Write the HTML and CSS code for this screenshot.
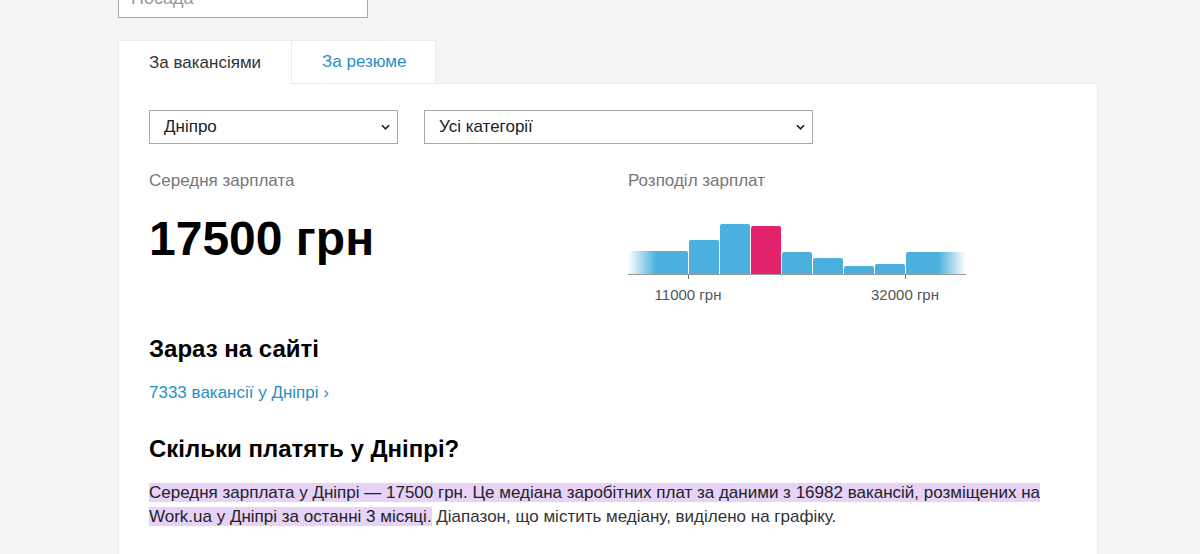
FILE: index.html
```html
<!DOCTYPE html>
<html lang="uk">
<head>
<meta charset="utf-8">
<title>Зарплати</title>
<link rel="stylesheet" href="styles.css">
</head>
<body>
<div class="wrap">
  <div class="search"><input class="search-input" type="text" placeholder="Посада"></div>
  <div class="tabs">
    <div class="tab tab-active">За вакансіями</div>
    <div class="tab tab-link">За резюме</div>
    <div class="tab-rest"></div>
  </div>
  <div class="panel">
    <div class="filters">
      <div class="select select-city"><span>Дніпро</span><svg class="chev" viewBox="0 0 10 6" width="9" height="6"><path d="M1 1l4 4 4-4" fill="none" stroke="#222" stroke-width="1.8"/></svg></div>
      <div class="select select-cat"><span>Усі категорії</span><svg class="chev" viewBox="0 0 10 6" width="9" height="6"><path d="M1 1l4 4 4-4" fill="none" stroke="#222" stroke-width="1.8"/></svg></div>
    </div>
    <div class="stats">
      <div class="stat">
        <div class="label">Середня зарплата</div>
        <div class="big">17500 грн</div>
      </div>
      <div class="dist">
        <div class="label">Розподіл зарплат</div>
        <div class="chart">
          <div class="bars">
            <div class="bar bar-wide fade-left" style="height:23px"></div>
            <div class="bar" style="height:34px"></div>
            <div class="bar" style="height:50px"></div>
            <div class="bar bar-hl" style="height:48px"></div>
            <div class="bar" style="height:22px"></div>
            <div class="bar" style="height:16px"></div>
            <div class="bar" style="height:8px"></div>
            <div class="bar" style="height:10px"></div>
            <div class="bar bar-wide fade-right" style="height:22px"></div>
            <span class="tick tick-a"></span>
            <span class="tick tick-b"></span>
          </div>
          <div class="axis-labels">
            <span class="ax ax-a">11000 грн</span>
            <span class="ax ax-b">32000 грн</span>
          </div>
        </div>
      </div>
    </div>
    <h2 class="h2 h2-first">Зараз на сайті</h2>
    <a class="link" href="#">7333 вакансії у Дніпрі ›</a>
    <h2 class="h2 h2-second">Скільки платять у Дніпрі?</h2>
    <p class="text"><span class="mark">Середня зарплата у Дніпрі — 17500 грн. Це медіана заробітних плат за даними з 16982 вакансій, розміщених на Work.ua у Дніпрі за останні 3 місяці.</span> Діапазон, що містить медіану, виділено на графіку.</p>
  </div>
</div>
</body>
</html>
```
FILE: styles.css
```css
html, body {
  margin: 0;
  padding: 0;
  background: #f3f4f6;
  font-family: "Liberation Sans", Arial, sans-serif;
  color: #333;
}
.wrap {
  width: 980px;
  margin-left: 118px;
}
.search {
  margin-top: -22px;
}
.search-input {
  box-sizing: border-box;
  width: 250px;
  height: 40px;
  border: 1px solid #a9a9a9;
  padding: 0 12px;
  font: 18px "Liberation Sans", Arial, sans-serif;
  background: #fff;
  display: block;
}
.search-input::placeholder { color: #999; }
.tabs {
  display: flex;
  margin-top: 22px;
  height: 44px;
}
.tab {
  box-sizing: border-box;
  height: 44px;
  display: flex;
  align-items: center;
  font-size: 17px;
  background: #fff;
  border: 1px solid #ececec;
}
.tab-active {
  width: 173px;
  padding-left: 30px;
  border-bottom: none;
  color: #333;
  border-right: none;
}
.tab-link {
  width: 145px;
  padding-left: 30px;
  color: #2a8fc4;
}
.tab-rest {
  flex: 1;
  border-bottom: 1px solid #ececec;
  border-right: 1px solid transparent;
}
.panel {
  background: #fff;
  border: 1px solid #ececec;
  border-top: none;
  padding: 26px 30px 40px 30px;
}
.filters {
  display: flex;
  gap: 26px;
}
.select {
  box-sizing: border-box;
  height: 34px;
  border: 1px solid #a9a9a9;
  display: flex;
  align-items: center;
  justify-content: space-between;
  padding: 0 7px 0 14px;
  font-size: 17px;
  color: #222;
}
.select-city { width: 249px; }
.select-cat { width: 389px; }
.chev { display: block; }
.stats {
  display: grid;
  grid-template-columns: 479px 1fr;
  margin-top: 25px;
}
.label {
  font-size: 17px;
  line-height: 24px;
  color: #767676;
}
.big {
  margin-top: 22px;
  font-size: 48px;
  line-height: 48px;
  font-weight: bold;
  color: #000;
}
.chart {
  margin-top: 19px;
  width: 338px;
}
.bars {
  position: relative;
  display: flex;
  align-items: flex-end;
  gap: 1px;
  height: 62px;
  border-bottom: 1px solid #9a9a9a;
}
.bar {
  width: 30px;
  background: #4cb0de;
  border-radius: 2px 2px 0 0;
}
.bar-wide { width: 60px; }
.bar-hl { background: #e2226a; }
.fade-left {
  background: linear-gradient(to right, rgba(76,176,222,0) 0, #4cb0de 28px);
}
.fade-right {
  background: linear-gradient(to left, rgba(76,176,222,0) 0, #4cb0de 28px);
}
.tick {
  position: absolute;
  bottom: -5px;
  width: 1px;
  height: 5px;
  background: #777;
}
.tick-a { left: 60px; }
.tick-b { left: 277px; }
.axis-labels {
  position: relative;
  height: 30px;
  font-size: 15px;
  color: #555;
}
.ax {
  position: absolute;
  top: 11px;
  transform: translateX(-50%);
  white-space: nowrap;
}
.ax-a { left: 60px; }
.ax-b { left: 277px; }
.h2 {
  margin: 0;
  font-size: 24px;
  line-height: 28px;
  font-weight: bold;
  color: #000;
}
.h2-first { margin-top: 30px; }
.link {
  display: block;
  margin-top: 18px;
  font-size: 17px;
  line-height: 24px;
  color: #2a8fc4;
  text-decoration: none;
}
.h2-second { margin-top: 30px; }
.text {
  margin: 18px 0 0 0;
  font-size: 17px;
  line-height: 24px;
  color: #333;
}
.mark {
  background: #e6d3f7;
  color: #222;
}
```
